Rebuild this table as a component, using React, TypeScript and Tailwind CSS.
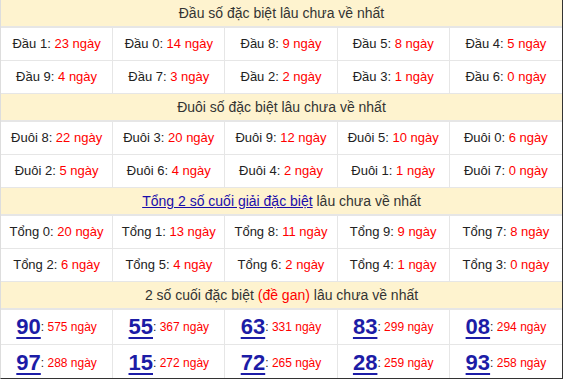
import React from "react";

type Item = { label: string; value: string };

const dau1: Item[] = [
  { label: "Đầu 1", value: "23" },
  { label: "Đầu 0", value: "14" },
  { label: "Đầu 8", value: "9" },
  { label: "Đầu 5", value: "8" },
  { label: "Đầu 4", value: "5" },
  { label: "Đầu 9", value: "4" },
  { label: "Đầu 7", value: "3" },
  { label: "Đầu 2", value: "2" },
  { label: "Đầu 3", value: "1" },
  { label: "Đầu 6", value: "0" },
];

const duoi: Item[] = [
  { label: "Đuôi 8", value: "22" },
  { label: "Đuôi 3", value: "20" },
  { label: "Đuôi 9", value: "12" },
  { label: "Đuôi 5", value: "10" },
  { label: "Đuôi 0", value: "6" },
  { label: "Đuôi 2", value: "5" },
  { label: "Đuôi 6", value: "4" },
  { label: "Đuôi 4", value: "2" },
  { label: "Đuôi 1", value: "1" },
  { label: "Đuôi 7", value: "0" },
];

const tong: Item[] = [
  { label: "Tổng 0", value: "20" },
  { label: "Tổng 1", value: "13" },
  { label: "Tổng 8", value: "11" },
  { label: "Tổng 9", value: "9" },
  { label: "Tổng 7", value: "8" },
  { label: "Tổng 2", value: "6" },
  { label: "Tổng 5", value: "4" },
  { label: "Tổng 6", value: "2" },
  { label: "Tổng 4", value: "1" },
  { label: "Tổng 3", value: "0" },
];

const gan: Item[] = [
  { label: "90", value: "575" },
  { label: "55", value: "367" },
  { label: "63", value: "331" },
  { label: "83", value: "299" },
  { label: "08", value: "294" },
  { label: "97", value: "288" },
  { label: "15", value: "272" },
  { label: "72", value: "265" },
  { label: "28", value: "259" },
  { label: "93", value: "258" },
];

function Header({ children }: { children: React.ReactNode }) {
  return (
    <div className="flex h-[28px] items-center justify-center border-b-2 border-[#e6e6e6] bg-[#fef3cf] text-[14px] text-[#333]">
      {children}
    </div>
  );
}

function Grid({ items }: { items: Item[] }) {
  return (
    <div className="grid grid-cols-5">
      {items.map((it) => (
        <div
          key={it.label}
          className="flex h-[33px] items-center justify-center border-r border-b border-[#e6e6e6] text-[13px] text-[#222] [&:nth-child(5n)]:border-r-0"
        >
          {it.label}:&nbsp;<span className="text-[#f00]">{it.value} ngày</span>
        </div>
      ))}
    </div>
  );
}

function GanGrid({ items }: { items: Item[] }) {
  return (
    <div className="grid grid-cols-5">
      {items.map((it, i) => (
        <div
          key={it.label}
          className={
            "flex h-[35px] items-center justify-center border-[#e6e6e6] text-[#222] [&:nth-child(5n)]:border-r-0 " +
            (i < 5 ? "border-r border-b" : "border-r")
          }
        >
          <span className="text-[22px] font-bold leading-none text-[#1c1ca6] underline decoration-2 underline-offset-[3px]">
            {it.label}
          </span>
          <span className="text-[12px]">:&nbsp;</span>
          <span className="text-[12px] text-[#f00]">{it.value} ngày</span>
        </div>
      ))}
    </div>
  );
}

export default function App() {
  return (
    <div
      className="h-[379px] w-[563px] overflow-hidden border-r border-b border-l border-r-[#333] border-b-[#333] border-l-[#ddd] bg-white"
      style={{ fontFamily: '"Liberation Sans", Arial, sans-serif' }}
    >
      <Header>Đầu số đặc biệt lâu chưa về nhất</Header>
      <Grid items={dau1} />
      <Header>Đuôi số đặc biệt lâu chưa về nhất</Header>
      <Grid items={duoi} />
      <Header>
        <a className="text-[#1a0dab] underline" href="#">
          Tổng 2 số cuối giải đặc biệt
        </a>
        &nbsp;lâu chưa về nhất
      </Header>
      <Grid items={tong} />
      <Header>
        2 số cuối đặc biệt&nbsp;<span className="text-[#f00]">(đề gan)</span>&nbsp;lâu chưa về nhất
      </Header>
      <GanGrid items={gan} />
    </div>
  );
}
